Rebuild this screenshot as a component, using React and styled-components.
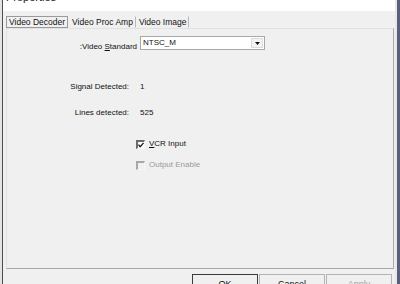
import React from "react";
import styled, { createGlobalStyle } from "styled-components";

const Global = createGlobalStyle`
  html, body { margin: 0; padding: 0; background: #f0f0f0; }
  body { font-family: "Liberation Sans", Arial, sans-serif; font-size: 8px; color: #111; }
  * { box-sizing: border-box; }
`;

const Window = styled.div`
  width: 400px;
  height: 284px;
  overflow: hidden;
  background: #f0f0f0;
  border-left: 2px solid #e4e4e4;
  border-right: 3px solid #5a5f80;
  display: flex;
`;

const Inner = styled.div`
  flex: 1;
  border-left: 1px solid #4e4e4e;
  border-right: 2px solid #e8e8e8;
  display: flex;
  flex-direction: column;
`;

const TitleBar = styled.div`
  height: 11px;
  flex: none;
  background: #ffffff;
  display: flex;
  justify-content: space-between;
  align-items: flex-end;
  overflow: hidden;
  padding: 0 6px 0 3px;
`;

const Title = styled.span`
  font-size: 11px;
  line-height: 11px;
  margin-bottom: 8px;
  color: #222;
`;

const Close = styled.span`
  font-size: 11px;
  line-height: 11px;
  margin-bottom: 8px;
  color: #444;
`;

const Body = styled.div`
  padding: 5px 0 0 3px;
  display: flex;
  flex-direction: column;
`;

const TabStrip = styled.div`
  display: flex;
  height: 12px;
  align-items: stretch;
`;

const Tab = styled.div`
  display: flex;
  align-items: center;
  padding: 0 2px;
  font-size: 8.5px;
  white-space: nowrap;
  border: 1px solid ${(p) => (p.$active ? "#9a9a9a" : "transparent")};
  border-right: 1px solid ${(p) => (p.$active ? "#9a9a9a" : "#b8b8b8")};
  margin-right: ${(p) => (p.$active ? "1px" : "0")};
`;

const Panel = styled.div`
  width: 388px;
  height: 241px;
  border-top: 1px solid #e2e2e2;
  border-left: 1px solid #e2e2e2;
  border-right: 1px solid #a8a8a8;
  border-bottom: 1px solid #a8a8a8;
  display: flex;
  flex-direction: column;
`;

const FieldRow = styled.div`
  display: grid;
  grid-template-columns: 131px auto;
  column-gap: 2px;
  align-items: start;
  margin-top: ${(p) => p.$top}px;
`;

const Label = styled.span`
  text-align: right;
  padding-right: ${(p) => p.$pad || 0}px;
  padding-top: ${(p) => p.$dy || 0}px;
  white-space: nowrap;
  line-height: 10px;
`;

const Value = styled.span`
  line-height: 10px;
`;

const Select = styled.div`
  width: 125px;
  height: 14px;
  background: #fff;
  border: 1px solid #a8a8a8;
  display: flex;
  align-items: stretch;
`;

const SelectText = styled.span`
  flex: 1;
  padding: 1px 0 0 2px;
  line-height: 9px;
`;

const SelectButton = styled.div`
  width: 12px;
  margin: 1px;
  border: 1px solid #dcdcdc;
  background: #f4f4f4;
  display: flex;
  align-items: center;
  justify-content: center;
`;

const CheckRow = styled.label`
  display: flex;
  align-items: center;
  gap: 4px;
  margin-top: ${(p) => p.$top}px;
  padding-left: 129px;
  color: ${(p) => (p.$disabled ? "#9a9a9a" : "#111")};
  line-height: 10px;
`;

const Box = styled.span`
  width: 9px;
  height: 9px;
  border-top: 2px solid ${(p) => (p.$disabled ? "#a8a8a8" : "#6a6a6a")};
  border-left: 2px solid ${(p) => (p.$disabled ? "#a8a8a8" : "#6a6a6a")};
  border-right: 1px solid #f8f8f8;
  border-bottom: 1px solid #f8f8f8;
  background: ${(p) => (p.$disabled ? "#f0f0f0" : "#ffffff")};
  display: flex;
  align-items: center;
  justify-content: center;
`;

const Under = styled.span`
  text-decoration: underline;
`;

const ButtonRow = styled.div`
  display: flex;
  gap: 1px;
  margin-top: 5px;
  padding-left: 186px;
`;

const Button = styled.div`
  width: 66px;
  height: 22px;
  border: 1px solid ${(p) => (p.$default ? "#3c3c3c" : "#b4b4b4")};
  background: #f0f0f0;
  display: flex;
  justify-content: center;
  padding-top: 4px;
  font-size: 9px;
  color: ${(p) => (p.$disabled ? "#a0a0a0" : "#111")};
`;

export default function App() {
  return (
    <>
      <Global />
      <Window>
        <Inner>
          <TitleBar>
            <Title>Properties</Title>
            <Close>✕</Close>
          </TitleBar>
          <Body>
            <TabStrip>
              <Tab $active>Video Decoder</Tab>
              <Tab>Video Proc Amp</Tab>
              <Tab>Video Image</Tab>
            </TabStrip>
            <Panel>
              <FieldRow $top={7}>
                <Label $pad={1} $dy={6}>
                  :Video <Under>S</Under>tandard
                </Label>
                <Select>
                  <SelectText>NTSC_M</SelectText>
                  <SelectButton>
                    <svg width="5" height="3" viewBox="0 0 5 3">
                      <path d="M0 0 H5 L2.5 3 Z" fill="#111" />
                    </svg>
                  </SelectButton>
                </Select>
              </FieldRow>
              <FieldRow $top={30}>
                <Label $pad={9}>Signal Detected:</Label>
                <Value>1</Value>
              </FieldRow>
              <FieldRow $top={16}>
                <Label $pad={9}>Lines detected:</Label>
                <Value>525</Value>
              </FieldRow>
              <CheckRow $top={21}>
                <Box>
                  <svg width="7" height="6" viewBox="0 0 7 6">
                    <path d="M0.5 2.5 L2.5 5 L6.5 0.5" stroke="#111" strokeWidth="1.4" fill="none" />
                  </svg>
                </Box>
                <span>
                  <Under>V</Under>CR Input
                </span>
              </CheckRow>
              <CheckRow $top={11} $disabled>
                <Box $disabled />
                <span>Output Enable</span>
              </CheckRow>
            </Panel>
            <ButtonRow>
              <Button $default>OK</Button>
              <Button>Cancel</Button>
              <Button $disabled>Apply</Button>
            </ButtonRow>
          </Body>
        </Inner>
      </Window>
    </>
  );
}
